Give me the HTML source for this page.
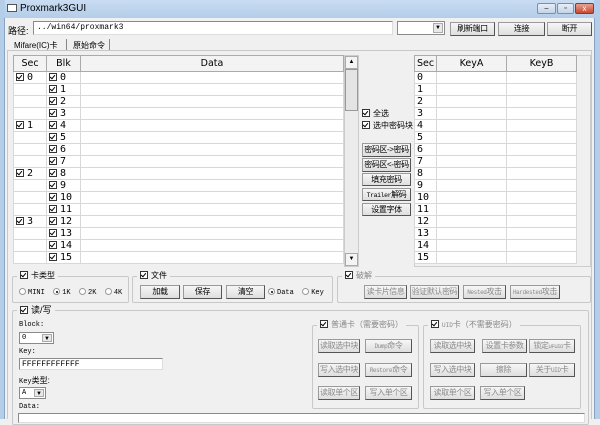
<!DOCTYPE html>
<html><head><meta charset="utf-8"><style>
*{box-sizing:border-box;margin:0;padding:0}
body{width:600px;height:419px;overflow:hidden;background:#f0f0f0;font-family:"Liberation Sans","Noto Sans CJK SC",sans-serif;font-size:9px;color:#000;position:relative}
.a{position:absolute}
.btn{position:absolute;background:linear-gradient(#f6f6f6,#dedede);border:1px solid #9a9a9a;border-right-color:#555;border-bottom-color:#555;text-align:center;font-size:8px;letter-spacing:-0.4px;line-height:12px;white-space:nowrap;overflow:hidden}
.dis{color:#8a8a8a}
.grp{position:absolute;border:1px solid #c8c8c8;border-radius:2px}
.gl{position:absolute;top:-7px;left:4px;background:#f0f0f0;padding:0 3px;font-size:8px;line-height:12px;white-space:nowrap}
.cb{display:inline-block;width:8px;height:8px;border:1px solid #333;background:#fff;vertical-align:-1px;margin-right:3px;position:relative}
.cb:after{content:"";position:absolute;left:1px;top:0px;width:2px;height:4px;border:solid #000;border-width:0 1.5px 1.5px 0;transform:rotate(40deg)}
.rd{display:inline-block;width:7px;height:7px;border:1px solid #999;border-radius:50%;background:#fff;vertical-align:-1px;margin-right:2px;position:relative}
.rd.on:after{content:"";position:absolute;left:1.5px;top:1.5px;width:2px;height:2px;background:#000;border-radius:50%}
.inp{position:absolute;background:#fff;border:1px solid #8a8a8a;border-right-color:#ddd;border-bottom-color:#ddd}
.combo{position:absolute;background:#fff;border:1px solid #8a8a8a}
.combo .dd{position:absolute;right:1px;top:1px;bottom:1px;width:10px;background:#e8e8e8;border:1px solid #aaa;font-size:6px;text-align:center;line-height:8px}
table{border-collapse:collapse;position:absolute;background:#fff;table-layout:fixed}
td,th{border:1px solid #d8d8d8;height:12px;font-family:"DejaVu Sans Mono","Liberation Mono",monospace;font-size:10px;line-height:10px;padding:0 2px;white-space:nowrap;overflow:hidden;font-weight:normal}
th{background:#f3f3f3;border-color:#aaa;height:16px;font-family:"DejaVu Sans",sans-serif;font-size:9.5px}
.mono{font-family:"Liberation Mono",monospace;font-size:8px}
.ck{font-size:8px;white-space:nowrap}
</style></head><body>
<div class="a" style="left:0;top:0;width:600px;height:18px;background:linear-gradient(#c9dcf2,#b4cde9)"></div>
<div class="a" style="left:0;top:0;width:5px;height:419px;background:#b4cde9"></div>
<div class="a" style="left:594px;top:0;width:6px;height:419px;background:#b4cde9"></div>
<div class="a" style="left:4px;top:18px;width:591px;height:401px;background:#f0f0f0;border-left:1px solid #8aa3c0;border-right:1px solid #8aa3c0"></div>
<div class="a" style="left:7px;top:4px;width:10px;height:8px;border:1px solid #555;background:#fff"></div>
<div class="a" style="left:20px;top:3px;font-size:10px;line-height:11px">Proxmark3GUI</div>
<div class="a" style="left:537px;top:3px;width:19px;height:11px;border:1px solid #7a8fa8;border-radius:2px;background:linear-gradient(#e6eef8,#c4d3e6);font-size:7px;text-align:center;line-height:9px">–</div>
<div class="a" style="left:557px;top:3px;width:17px;height:11px;border:1px solid #7a8fa8;border-radius:2px;background:linear-gradient(#e6eef8,#c4d3e6);font-size:7px;text-align:center;line-height:9px">▫</div>
<div class="a" style="left:575px;top:3px;width:19px;height:11px;border:1px solid #8a3a2a;border-radius:2px;background:linear-gradient(#e8a090,#c84830);color:#fff;font-size:8px;text-align:center;line-height:9px">x</div>

<div class="a" style="left:8px;top:24px;font-size:9px">路径:</div>
<div class="inp" style="left:33px;top:21px;width:360px;height:14px"><span class="mono a" style="left:3px;top:1px">../win64/proxmark3</span></div>
<div class="combo" style="left:397px;top:21px;width:48px;height:14px"><div class="dd">▼</div></div>
<div class="btn" style="left:450px;top:22px;width:45px;height:14px">刷新端口</div>
<div class="btn" style="left:498px;top:22px;width:47px;height:14px">连接</div>
<div class="btn" style="left:547px;top:22px;width:45px;height:14px">断开</div>

<div class="a" style="left:14px;top:40px;font-size:8px">Mifare(IC)卡</div>
<div class="a" style="left:66px;top:39px;width:1px;height:11px;background:#888"></div>
<div class="a" style="left:73px;top:40px;font-size:8px">原始命令</div>
<div class="a" style="left:109px;top:39px;width:1px;height:11px;background:#888"></div>
<div class="a" style="left:7px;top:50px;width:585px;height:369px;border:1px solid #c8c8c8;border-bottom:none"></div>

<table style="left:13px;top:55px;width:331px">
<colgroup><col style="width:33px"><col style="width:34px"><col></colgroup>
<tr><th>Sec</th><th>Blk</th><th>Data</th></tr>
<tr><td><span class="cb"></span>0</td><td><span class="cb"></span>0</td><td></td></tr>
<tr><td></td><td><span class="cb"></span>1</td><td></td></tr>
<tr><td></td><td><span class="cb"></span>2</td><td></td></tr>
<tr><td></td><td><span class="cb"></span>3</td><td></td></tr>
<tr><td><span class="cb"></span>1</td><td><span class="cb"></span>4</td><td></td></tr>
<tr><td></td><td><span class="cb"></span>5</td><td></td></tr>
<tr><td></td><td><span class="cb"></span>6</td><td></td></tr>
<tr><td></td><td><span class="cb"></span>7</td><td></td></tr>
<tr><td><span class="cb"></span>2</td><td><span class="cb"></span>8</td><td></td></tr>
<tr><td></td><td><span class="cb"></span>9</td><td></td></tr>
<tr><td></td><td><span class="cb"></span>10</td><td></td></tr>
<tr><td></td><td><span class="cb"></span>11</td><td></td></tr>
<tr><td><span class="cb"></span>3</td><td><span class="cb"></span>12</td><td></td></tr>
<tr><td></td><td><span class="cb"></span>13</td><td></td></tr>
<tr><td></td><td><span class="cb"></span>14</td><td></td></tr>
<tr><td></td><td><span class="cb"></span>15</td><td></td></tr>
</table>
<div class="a" style="left:344px;top:55px;width:15px;height:212px;background:#ececec;border:1px solid #ccc"></div>
<div class="a" style="left:345px;top:56px;width:13px;height:13px;border:1px solid #aaa;background:#f4f4f4;font-size:6px;text-align:center;line-height:11px">▲</div>
<div class="a" style="left:345px;top:69px;width:13px;height:42px;border:1px solid #999;background:#e4e4e4"></div>
<div class="a" style="left:345px;top:253px;width:13px;height:13px;border:1px solid #aaa;background:#f4f4f4;font-size:6px;text-align:center;line-height:11px">▼</div>

<div class="a ck" style="left:362px;top:108px"><span class="cb"></span>全选</div>
<div class="a ck" style="left:362px;top:120px"><span class="cb"></span>选中密码块</div>
<div class="btn" style="left:362px;top:143px;width:49px;height:14px">密码区->密码</div>
<div class="btn" style="left:362px;top:158px;width:49px;height:14px">密码区<-密码</div>
<div class="btn" style="left:362px;top:173px;width:49px;height:13px">填充密码</div>
<div class="btn" style="left:362px;top:188px;width:49px;height:13px"><span class="mono" style="font-size:6.5px">Trailer</span>解码</div>
<div class="btn" style="left:362px;top:203px;width:49px;height:13px">设置字体</div>

<div class="a" style="left:414px;top:55px;width:177px;height:212px;background:#f0f0f0;border:1px solid #ccc"></div>
<table style="left:414px;top:55px;width:163px">
<colgroup><col style="width:22px"><col style="width:70px"><col></colgroup>
<tr><th>Sec</th><th>KeyA</th><th>KeyB</th></tr>
<tr><td>0</td><td></td><td></td></tr><tr><td>1</td><td></td><td></td></tr>
<tr><td>2</td><td></td><td></td></tr><tr><td>3</td><td></td><td></td></tr>
<tr><td>4</td><td></td><td></td></tr><tr><td>5</td><td></td><td></td></tr>
<tr><td>6</td><td></td><td></td></tr><tr><td>7</td><td></td><td></td></tr>
<tr><td>8</td><td></td><td></td></tr><tr><td>9</td><td></td><td></td></tr>
<tr><td>10</td><td></td><td></td></tr><tr><td>11</td><td></td><td></td></tr>
<tr><td>12</td><td></td><td></td></tr><tr><td>13</td><td></td><td></td></tr>
<tr><td>14</td><td></td><td></td></tr><tr><td>15</td><td></td><td></td></tr>
</table>

<div class="grp" style="left:12px;top:276px;width:117px;height:27px"><div class="gl"><span class="cb"></span>卡类型</div></div>
<div class="a mono" style="left:19px;top:288px;font-size:7px;white-space:nowrap"><span class="rd"></span>MINI&nbsp;&nbsp;<span class="rd on"></span>1K&nbsp;&nbsp;<span class="rd"></span>2K&nbsp;&nbsp;<span class="rd"></span>4K</div>
<div class="grp" style="left:132px;top:276px;width:201px;height:27px"><div class="gl"><span class="cb"></span>文件</div></div>
<div class="btn" style="left:140px;top:285px;width:40px;height:14px">加载</div>
<div class="btn" style="left:183px;top:285px;width:39px;height:14px">保存</div>
<div class="btn" style="left:226px;top:285px;width:39px;height:14px">清空</div>
<div class="a mono" style="left:268px;top:288px;font-size:7px;white-space:nowrap"><span class="rd on"></span>Data&nbsp;&nbsp;<span class="rd"></span>Key</div>
<div class="grp" style="left:337px;top:276px;width:254px;height:27px"><div class="gl" style="color:#888"><span class="cb"></span>破解</div></div>
<div class="btn dis" style="left:364px;top:285px;width:43px;height:14px">读卡片信息</div>
<div class="btn dis" style="left:410px;top:285px;width:49px;height:14px">验证默认密码</div>
<div class="btn dis" style="left:463px;top:285px;width:43px;height:14px"><span class="mono" style="font-size:6px">Nested</span>攻击</div>
<div class="btn dis" style="left:510px;top:285px;width:50px;height:14px"><span class="mono" style="font-size:6px">Hardested</span>攻击</div>

<div class="grp" style="left:12px;top:310px;width:577px;height:115px"><div class="gl" style="font-size:9px"><span class="cb"></span>读/写</div></div>
<div class="a mono" style="left:19px;top:321px;font-size:7px">Block:</div>
<div class="combo" style="left:19px;top:332px;width:35px;height:12px"><span class="a mono" style="left:2px;top:1px;font-size:7px">0</span><div class="dd">▼</div></div>
<div class="a mono" style="left:19px;top:348px;font-size:7px">Key:</div>
<div class="inp" style="left:19px;top:358px;width:144px;height:12px"><span class="a mono" style="left:2px;top:1px;font-size:8px">FFFFFFFFFFFF</span></div>
<div class="a" style="left:19px;top:375px;font-size:8px"><span class="mono" style="font-size:7px">Key</span>类型:</div>
<div class="combo" style="left:19px;top:387px;width:27px;height:12px"><span class="a mono" style="left:2px;top:1px;font-size:7px">A</span><div class="dd">▼</div></div>
<div class="a mono" style="left:19px;top:403px;font-size:7px">Data:</div>
<div class="inp" style="left:18px;top:413px;width:567px;height:10px"></div>

<div class="grp" style="left:312px;top:325px;width:107px;height:84px"><div class="gl" style="color:#888"><span class="cb"></span>普通卡（需要密码）</div></div>
<div class="btn dis" style="left:318px;top:339px;width:42px;height:14px">读取选中块</div>
<div class="btn dis" style="left:365px;top:339px;width:47px;height:14px"><span class="mono" style="font-size:6px">Dump</span>命令</div>
<div class="btn dis" style="left:318px;top:363px;width:42px;height:14px">写入选中块</div>
<div class="btn dis" style="left:365px;top:363px;width:47px;height:14px"><span class="mono" style="font-size:6px">Restore</span>命令</div>
<div class="btn dis" style="left:318px;top:386px;width:42px;height:14px">读取单个区</div>
<div class="btn dis" style="left:365px;top:386px;width:47px;height:14px">写入单个区</div>

<div class="grp" style="left:423px;top:325px;width:158px;height:84px"><div class="gl" style="color:#888"><span class="cb"></span><span class="mono" style="font-size:6px">UID</span>卡（不需要密码）</div></div>
<div class="btn dis" style="left:430px;top:339px;width:45px;height:14px">读取选中块</div>
<div class="btn dis" style="left:482px;top:339px;width:45px;height:14px">设置卡参数</div>
<div class="btn dis" style="left:529px;top:339px;width:46px;height:14px">锁定<span class="mono" style="font-size:5.5px">UFUID</span>卡</div>
<div class="btn dis" style="left:430px;top:363px;width:45px;height:14px">写入选中块</div>
<div class="btn dis" style="left:480px;top:363px;width:47px;height:14px">擦除</div>
<div class="btn dis" style="left:529px;top:363px;width:46px;height:14px">关于<span class="mono" style="font-size:6px">UID</span>卡</div>
<div class="btn dis" style="left:430px;top:386px;width:45px;height:14px">读取单个区</div>
<div class="btn dis" style="left:480px;top:386px;width:45px;height:14px">写入单个区</div>
</body></html>
